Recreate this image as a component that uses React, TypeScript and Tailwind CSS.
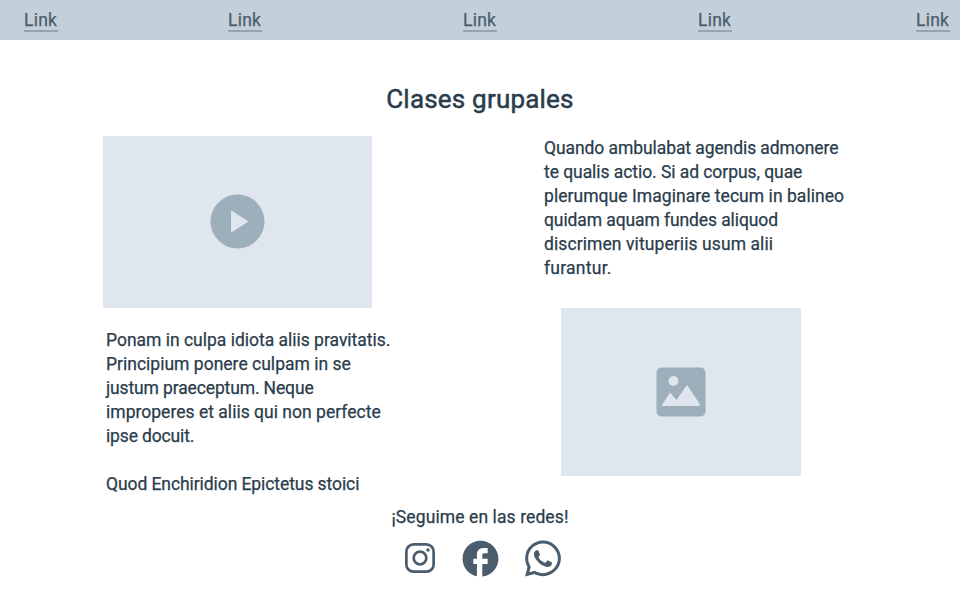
import { FaWhatsapp } from "react-icons/fa";
import { MdFacebook } from "react-icons/md";

function NavLink() {
  return (
    <a href="#" className="block h-6 w-[34px] whitespace-nowrap border-b-2 border-[#93a5b4] text-[17.5px] leading-6 tracking-[0.25px] text-[#4b5d6c]">
      Link
    </a>
  );
}

function Line({ text, className = "" }: { text: string; className?: string }) {
  return <span className={`block h-6 whitespace-nowrap ${className}`}>{text}</span>;
}

export default function App() {
  return (
    <div className="h-[600px] w-[960px] overflow-hidden bg-white font-['Roboto','Liberation_Sans',sans-serif] text-[17.5px] font-normal leading-6 text-[#2a3c4b] [-webkit-text-stroke:0.25px_currentColor]">
      <nav className="flex h-10 bg-[#c3cfd9] pl-6 pt-2">
        <div className="w-[204px]"><NavLink /></div>
        <div className="w-[235px]"><NavLink /></div>
        <div className="w-[235px]"><NavLink /></div>
        <div className="w-[218px]"><NavLink /></div>
        <NavLink />
      </nav>

      <h1 className="mt-[39px] h-[57px] text-center text-[26px] font-normal leading-[40px] tracking-[0.2px] [-webkit-text-stroke:0.5px_currentColor]">Clases grupales</h1>

      <main className="flex h-[368px] pl-[103px]">
        <section className="w-[441px]">
          <div className="flex h-[172px] w-[269px] items-center justify-center bg-[#dfe6ee]">
            <svg width="55" height="56" viewBox="0 0 55 56">
              <circle cx="27.5" cy="27.5" r="27" fill="#9eafbc" />
              <path d="M21 17.500v20q0 1.200 1.100.5L37.800 28q.7-.5 0-1L22.100 17q-1.100-.7-1.100.5Z" fill="#dfe6ee" />
            </svg>
          </div>
          <div className="pl-[3px] pt-5">
            <Line text="Ponam in culpa idiota aliis pravitatis." className="tracking-[-0.01px]" />
            <Line text="Principium ponere culpam in se" className="tracking-[0.01px]" />
            <Line text="justum praeceptum. Neque" className="tracking-[-0.13px]" />
            <Line text="improperes et aliis qui non perfecte" className="tracking-[0.02px]" />
            <Line text="ipse docuit." className="tracking-[-0.15px]" />
            <Line text="Quod Enchiridion Epictetus stoici" className="mt-6 tracking-[-0.08px]" />
          </div>
        </section>
        <section>
          <Line text="Quando ambulabat agendis admonere" className="tracking-[-0.08px]" />
          <Line text="te qualis actio. Si ad corpus, quae" className="tracking-[-0.06px]" />
          <Line text="plerumque Imaginare tecum in balineo" className="tracking-[0.05px]" />
          <Line text="quidam aquam fundes aliquod" className="tracking-[-0.1px]" />
          <Line text="discrimen vituperiis usum alii" className="tracking-[0.09px]" />
          <Line text="furantur." className="tracking-[0.25px]" />
          <div className="ml-[17px] mt-7 flex h-[168px] w-60 items-center justify-center bg-[#dfe6ee]">
            <svg width="50" height="50" viewBox="0 0 50 50">
              <rect x=".5" y=".5" width="49" height="49" rx="5" fill="#9eafbc" />
              <circle cx="17.500" cy="14" r="5" fill="#dfe6ee" />
              <path d="M6 38 13.500 26.200q.500-.700 1 0L20.500 33 30.500 18.600q.500-.700 1 0L44 37.500q.500 1.500-1 1.500H7q-1.500 0-1-1Z" fill="#dfe6ee" />
            </svg>
          </div>
        </section>
      </main>

      <footer>
        <p className="h-9 pt-px text-center tracking-[0.1px]">¡Seguime en las redes!</p>
        <div className="flex h-9 items-center pl-[405px]">
          <svg width="30" height="30" viewBox="0 0 30 30" fill="none" stroke="#4b5d6c" strokeWidth="2.700">
            <rect x="1.350" y="1.350" width="27.300" height="27.300" rx="7.200" />
            <circle cx="15" cy="15" r="6.300" />
            <circle cx="23" cy="7" r="1.800" fill="#4b5d6c" stroke="none" />
          </svg>
          <MdFacebook viewBox="0 -0.1 24 24" className="ml-6 size-[43px] shrink-0 text-[#4b5d6c]" />
          <FaWhatsapp viewBox="-6 0 448 512" className="ml-5 size-[41px] shrink-0 text-[#4b5d6c]" />
        </div>
      </footer>
    </div>
  );
}
